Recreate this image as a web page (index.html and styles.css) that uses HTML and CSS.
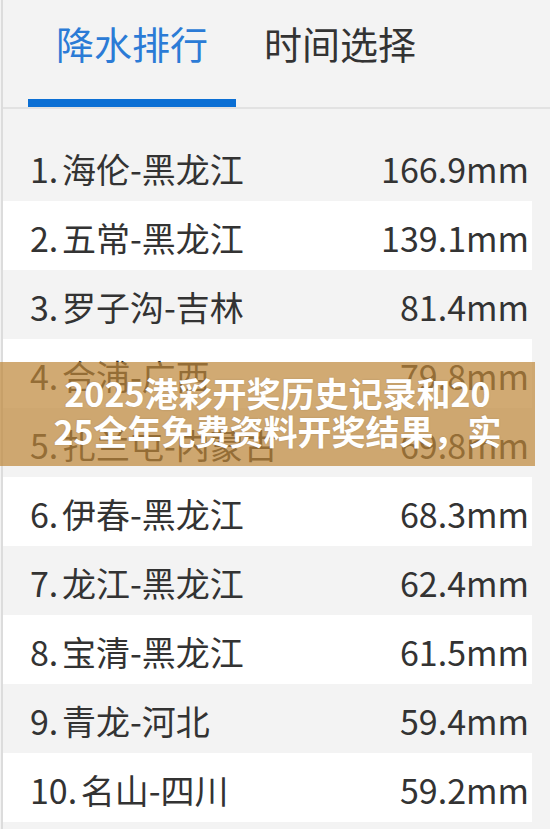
FILE: index.html
```html
<!DOCTYPE html>
<html lang="zh-CN">
<head>
<meta charset="utf-8">
<title>降水排行</title>
<link rel="stylesheet" href="styles.css">
</head>
<body>
<div class="page">
  <div class="tabs">
    <div class="tab active">降水排行</div>
    <div class="tab">时间选择</div>
  </div>
  <ol class="rank">
    <li class="row"><span class="name">1. 海伦-黑龙江</span><span class="val">166.9mm</span></li>
    <li class="row"><span class="name">2. 五常-黑龙江</span><span class="val">139.1mm</span></li>
    <li class="row"><span class="name">3. 罗子沟-吉林</span><span class="val">81.4mm</span></li>
    <li class="row"><span class="name">4. 合浦-广西</span><span class="val">79.8mm</span></li>
    <li class="row"><span class="name">5. 扎兰屯-内蒙古</span><span class="val">69.8mm</span></li>
    <li class="row"><span class="name">6. 伊春-黑龙江</span><span class="val">68.3mm</span></li>
    <li class="row"><span class="name">7. 龙江-黑龙江</span><span class="val">62.4mm</span></li>
    <li class="row"><span class="name">8. 宝清-黑龙江</span><span class="val">61.5mm</span></li>
    <li class="row"><span class="name">9. 青龙-河北</span><span class="val">59.4mm</span></li>
    <li class="row"><span class="name">10. 名山-四川</span><span class="val">59.2mm</span></li>
  </ol>
  <div class="banner">
    <span class="ln">2025港彩开奖历史记录和20</span>
    <span class="ln">25全年免费资料开奖结果，实</span>
  </div>
</div>
</body>
</html>
```
FILE: styles.css
```css
html, body {
  margin: 0;
  padding: 0;
}
body {
  background: #f3f3f3;
  font-family: "Noto Sans CJK SC", "Noto Sans", sans-serif;
  color: #333;
  width: 550px;
  height: 829px;
  overflow: hidden;
}
.page {
  position: relative;
  margin-left: 1px;
  border-left: 2px solid #dcdcdc;
  height: 829px;
}
.tabs {
  display: flex;
  padding-left: 25px;
  height: 107px;
  border-bottom: 2px solid #e2e2e2;
}
.tab {
  box-sizing: border-box;
  height: 107px;
  padding: 17px 28px 0;
  font-size: 38px;
  line-height: 52px;
  color: #333;
  border-bottom: 8px solid transparent;
}
.tab.active {
  color: #2b7bd6;
  border-bottom-color: #0b6fd4;
}
.rank {
  list-style: none;
  margin: 0 18px 0 0;
  padding: 23px 0 0;
}
.row {
  display: flex;
  justify-content: space-between;
  align-items: center;
  height: 69px;
  padding: 4px 3px 0 27px;
  box-sizing: border-box;
  font-size: 34px;
  line-height: 40px;
  color: #333;
}
.row:nth-child(even) {
  background: #fff;
}
.name {
  word-spacing: -4px;
}
.banner {
  position: absolute;
  left: -3px;
  top: 362px;
  width: 535px;
  height: 104px;
  box-sizing: border-box;
  padding: 12px 0 0 20px;
  background: rgba(190, 134, 56, 0.7);
  display: flex;
  flex-direction: column;
  align-items: center;
  color: #fff;
  font-weight: 700;
  font-size: 34px;
  line-height: 38px;
  text-shadow: 0 0 2px rgba(0, 0, 0, 0.15);
}
.ln {
  white-space: nowrap;
}
```
